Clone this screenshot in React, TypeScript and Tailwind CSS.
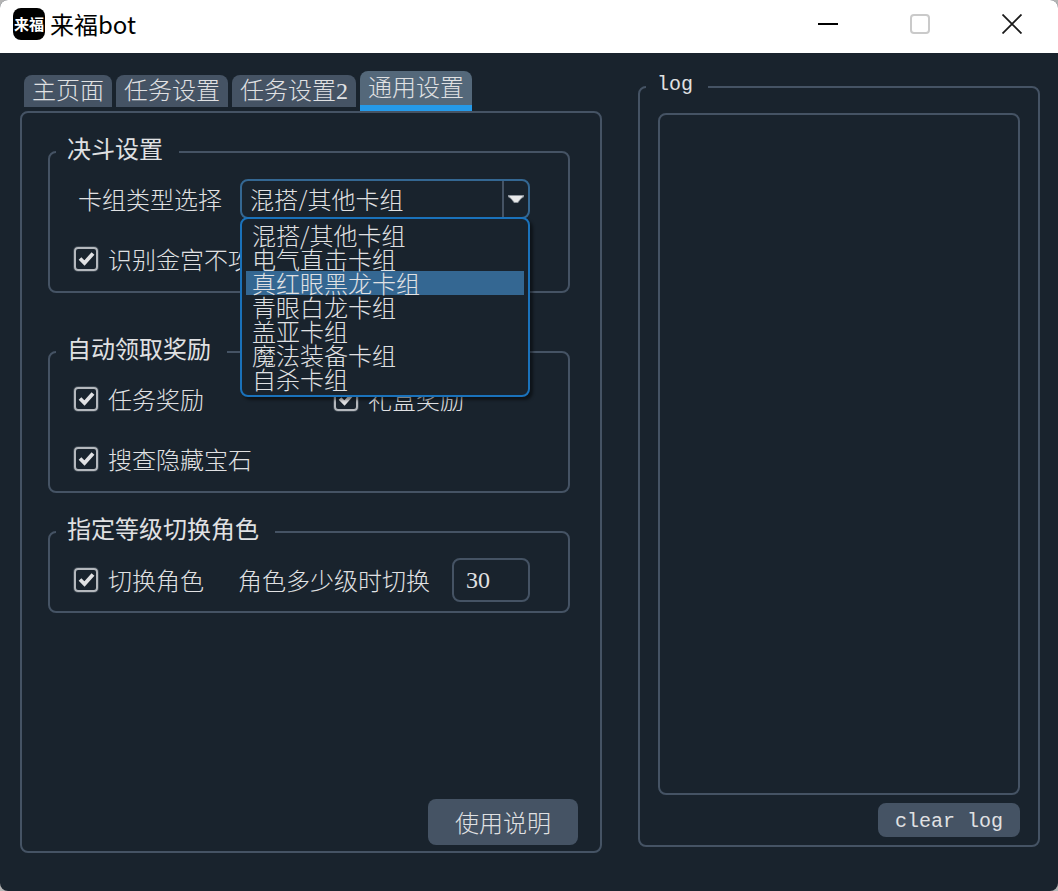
import React, { useState } from 'react';
import clsx from 'clsx';

const tabs = ['主页面', '任务设置', '任务设置2', '通用设置'];

const decks = [
  '混搭/其他卡组',
  '电气直击卡组',
  '真红眼黑龙卡组',
  '青眼白龙卡组',
  '盖亚卡组',
  '魔法装备卡组',
  '自杀卡组',
];

interface GroupProps {
  title: string;
  className?: string;
  children: React.ReactNode;
}

const Group: React.FC<GroupProps> = ({ title, className, children }) => (
  <fieldset className={clsx('min-w-0 rounded-lg border-2 border-[#455364] pl-1.5 pt-px pb-0.5', className)}>
    <legend className="pl-[11px] pr-4 pb-2 font-normal">{title}</legend>
    <div className="pl-[18px]">{children}</div>
  </fieldset>
);

const CheckBox: React.FC<{ label: string }> = ({ label }) => {
  const [checked, setChecked] = useState(true);

  return (
    <label className="flex items-center gap-2.5 whitespace-nowrap">
      <span className="relative w-6 h-6">
        <input
          type="checkbox"
          checked={checked}
          onChange={(e) => setChecked(e.target.checked)}
          className="block w-6 h-6 appearance-none rounded-sm border-2 border-[#b4b8bd] ring-1 ring-[#3a444e]"
        />
        {checked && (
          <svg viewBox="0 0 24 24" className="absolute inset-0 w-6 h-6 pointer-events-none" fill="none">
            <path d="M6 11.5L10.5 16L19 6.5" stroke="#e0e1e3" strokeWidth="3.8" />
          </svg>
        )}
      </span>
      {label}
    </label>
  );
};

const DeckSelect: React.FC = () => {
  const [open, setOpen] = useState(true);
  const [value, setValue] = useState(decks[0]);
  const [hovered, setHovered] = useState(2);

  const pick = (deck: string) => {
    setValue(deck);
    setOpen(false);
  };

  return (
    <div className="relative flex-1">
      <select
        id="deck"
        value={value}
        onChange={(e) => setValue(e.target.value)}
        onMouseDown={(e) => {
          e.preventDefault();
          setOpen(!open);
        }}
        className="block w-full h-10 pl-2 appearance-none rounded-lg border-2 border-[#346792] bg-[#19232d] outline-none"
      >
        {decks.map((deck) => (
          <option key={deck}>{deck}</option>
        ))}
      </select>
      <span className="absolute right-0.5 inset-y-0.5 w-[26px] border-l-2 border-[#455364] flex items-center justify-center pointer-events-none">
        <svg viewBox="0 0 16 8" className="w-4 h-2">
          <path d="M0 0H16V2L13 4L10 8H6L3 4L0 2Z" fill="#8d949c" />
          <path d="M1 1H15L9.500 7H6.500Z" fill="#e8e9ea" />
        </svg>
      </span>

      {open && (
        <ul
          role="listbox"
          className="absolute z-10 top-[38px] inset-x-0 p-1 rounded-lg border-2 border-[#1a72bb] bg-[#19232d] shadow-[3px_3px_3px_rgba(0,0,0,0.45)]"
        >
          {decks.map((deck, i) => (
            <li
              key={deck}
              role="option"
              aria-selected={i === hovered}
              onMouseEnter={() => setHovered(i)}
              onClick={() => pick(deck)}
              className={clsx('h-6 px-1.5', i === hovered && 'bg-[#346792]')}
            >
              {deck}
            </li>
          ))}
        </ul>
      )}
    </div>
  );
};

const TitleBar: React.FC = () => (
  <header className="h-[53px] pb-[5px] pl-[13px] flex items-center bg-white text-black">
    <div className="w-8 h-8 rounded-lg bg-black text-white text-[15px] font-bold flex items-center justify-center">
      来福
    </div>
    <h1 className="flex-1 pl-[5px] font-normal">来福bot</h1>
    <button aria-label="最小化" className="w-[92px] h-full flex items-center justify-center">
      <span className="w-5 h-0.5 bg-black" />
    </button>
    <button aria-label="最大化" disabled className="w-[92px] h-full flex items-center justify-center">
      <span className="w-5 h-5 rounded-sm border-2 border-[#cacaca]" />
    </button>
    <button aria-label="关闭" className="w-[92px] h-full flex items-center justify-center">
      <svg viewBox="0 0 20 20" className="w-5 h-5" stroke="#1a1a1a" strokeWidth="1.8">
        <path d="M0.500 0.500L19.500 19.500M19.500 0.500L0.500 19.500" />
      </svg>
    </button>
  </header>
);

const App: React.FC = () => {
  const [activeTab, setActiveTab] = useState(3);
  const [level, setLevel] = useState('30');
  const [log, setLog] = useState('');

  return (
    <div className="min-h-screen bg-[#b4b4b4]">
      <div
        className="min-h-screen flex flex-col overflow-hidden rounded-lg bg-[#19232d] text-[#e0e1e3] text-2xl leading-6 font-light font-['Noto_Sans_CJK_SC',sans-serif]"
      >
        <TitleBar />

        <main className="flex-1 flex gap-9 pt-[18px] pr-[18px] pb-[38px] pl-5">
          <section className="flex-1 flex flex-col">
            <div role="tablist" className="h-10 pl-1 flex items-center gap-1">
              {tabs.map((tab, i) => (
                <button
                  key={tab}
                  role="tab"
                  aria-selected={i === activeTab}
                  onClick={() => setActiveTab(i)}
                  className={clsx(
                    "px-2 rounded-t-lg font-['Liberation_Serif','Noto_Sans_CJK_SC',serif]",
                    i === activeTab ? 'h-10 bg-[#54687a] border-b-6 border-[#259ae9]' : 'h-8 bg-[#455364]'
                  )}
                >
                  {tab}
                </button>
              ))}
            </div>

            <div className="flex-1 flex flex-col rounded-lg border-2 border-[#455364] pt-[23px] pr-[22px] pb-1.5 pl-[26px]">
              <div className="flex flex-col gap-[23px] mr-2">
                <Group title="决斗设置" className="mb-5">
                  <div className="h-15 pl-1 pr-[38px] flex items-center gap-[18px]">
                    <label htmlFor="deck">卡组类型选择</label>
                    <DeckSelect />
                  </div>
                  <div className="h-15 flex items-center">
                    <CheckBox label="识别金宫不攻击" />
                  </div>
                </Group>

                <Group title="自动领取奖励">
                  <div className="grid grid-cols-[260px_1fr] auto-rows-[60px] items-center">
                    <CheckBox label="任务奖励" />
                    <CheckBox label="礼盒奖励" />
                    <CheckBox label="搜查隐藏宝石" />
                  </div>
                </Group>

                <Group title="指定等级切换角色">
                  <div className="h-15 pt-0.5 pr-[38px] flex items-center justify-between">
                    <CheckBox label="切换角色" />
                    <div className="flex items-center gap-[22px]">
                      <label htmlFor="level">角色多少级时切换</label>
                      <input
                        id="level"
                        type="text"
                        value={level}
                        onChange={(e) => setLevel(e.target.value)}
                        className="w-[78px] h-11 px-3 rounded-lg border-2 border-[#455364] bg-[#19232d] font-['Liberation_Serif',serif]"
                      />
                    </div>
                  </div>
                </Group>
              </div>

              <button className="mt-auto self-end w-[150px] h-[46px] rounded-lg bg-[#455364]">使用说明</button>
            </div>
          </section>

          <fieldset className="w-[402px] mb-1.5 flex flex-col rounded-lg border-2 border-[#455364] pt-2.5 pr-[18px] pb-2 pl-1.5">
            <legend className="pl-[11px] pr-[15px] pt-0.5 pb-1.5 text-xl leading-6 font-['Liberation_Mono',monospace]">log</legend>
            <div className="flex-1 pl-3 flex flex-col gap-2">
              <textarea
                aria-label="log"
                readOnly
                value={log}
                className="flex-1 p-2 resize-none rounded-lg border-2 border-[#455364] bg-[#19232d] text-xl outline-none"
              />
              <button
                onClick={() => setLog('')}
                className="self-end w-[142px] h-[34px] pt-1 rounded-lg bg-[#455364] text-xl leading-6 font-['Liberation_Mono',monospace]"
              >
                clear log
              </button>
            </div>
          </fieldset>
        </main>
      </div>
    </div>
  );
};

export default App;
